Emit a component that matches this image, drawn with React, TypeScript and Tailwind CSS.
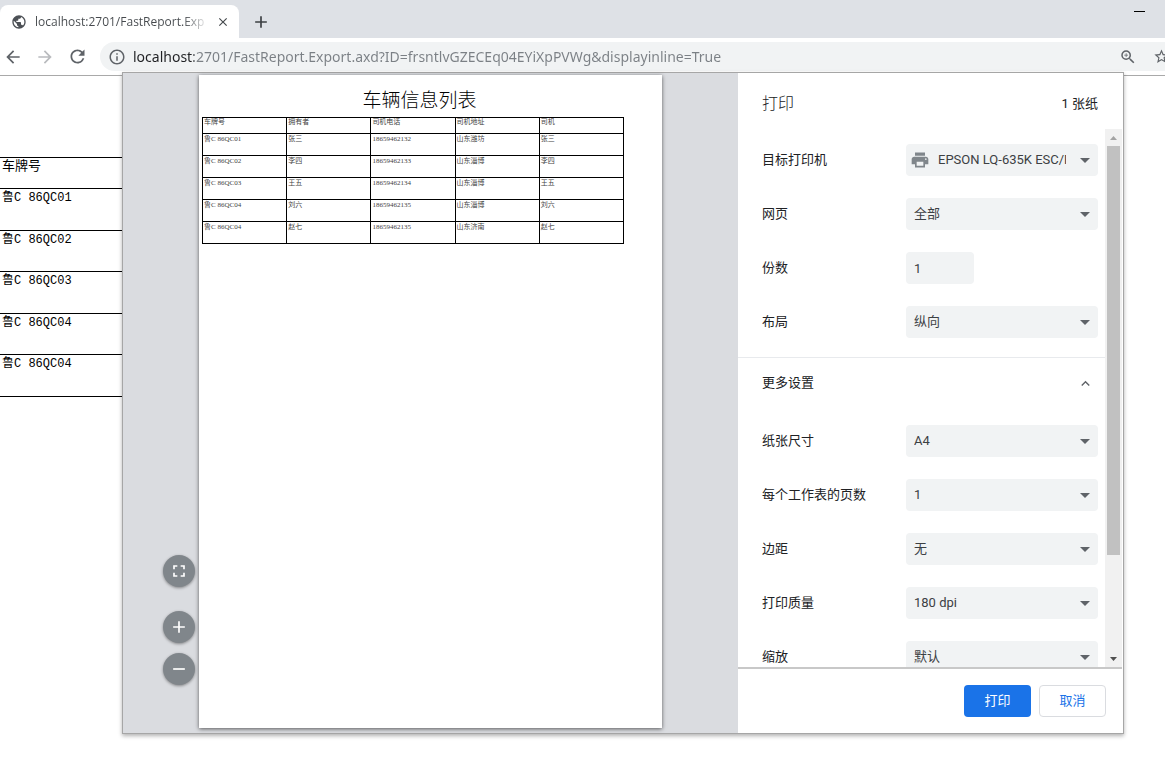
import React from "react";
import {
  MdAdd,
  MdArrowBack,
  MdArrowForward,
  MdClose,
  MdExpandLess,
  MdFullscreen,
  MdInfoOutline,
  MdPrint,
  MdPublic,
  MdRefresh,
  MdRemove,
  MdStarBorder,
  MdZoomIn,
} from "react-icons/md";

const URL_TEXT =
  "localhost:2701/FastReport.Export.axd?ID=frsntlvGZECEq04EYiXpPVWg&displayinline=True";

const plates = ["鲁C 86QC01", "鲁C 86QC02", "鲁C 86QC03", "鲁C 86QC04", "鲁C 86QC04"];

const columns = ["车牌号", "拥有者", "司机电话", "司机地址", "司机"];

const vehicles = [
  ["鲁C 86QC01", "张三", "18659462132", "山东潍坊", "张三"],
  ["鲁C 86QC02", "李四", "18659462133", "山东淄博", "李四"],
  ["鲁C 86QC03", "王五", "18659462134", "山东淄博", "王五"],
  ["鲁C 86QC04", "刘六", "18659462135", "山东淄博", "刘六"],
  ["鲁C 86QC04", "赵七", "18659462135", "山东济南", "赵七"],
];

const TabStrip = () => {
  return (
    <div className="flex h-[38px] items-end bg-[#dee1e6]">
      <div className="flex h-[33px] w-[239px] items-center rounded-t-lg bg-white pl-[11px] pr-[9px] pt-px">
        <MdPublic size={16} className="shrink-0 text-[#4d5156]" />
        <span className="ml-2 w-[174px] overflow-hidden whitespace-nowrap bg-[linear-gradient(90deg,#45494d_148px,transparent_174px)] bg-clip-text font-['Open_Sans',sans-serif] text-xs text-transparent">
          localhost:2701/FastReport.Exp
        </span>
        <button type="button" aria-label="关闭标签页" className="ml-auto text-[#45494d]">
          <MdClose size={14} />
        </button>
      </div>
      <button type="button" aria-label="新标签页" className="ml-3 mb-[6px] text-[#3c4043]">
        <MdAdd size={20} />
      </button>
      <button type="button" aria-label="最小化" className="ml-auto mr-5 flex h-full w-[11px] pt-[11px]">
        <span className="h-px w-full bg-black" />
      </button>
    </div>
  );
};

const Toolbar = () => {
  return (
    <div className="flex h-[38px] items-center border-b border-[#a9a9a9] bg-white pl-[3px] text-[#5f6368]">
      <button type="button" aria-label="后退">
        <MdArrowBack size={20} />
      </button>
      <button type="button" aria-label="前进" className="ml-3 text-[#b9bbbe]">
        <MdArrowForward size={20} />
      </button>
      <button type="button" aria-label="重新加载" className="ml-3">
        <MdRefresh size={21} />
      </button>
      <div className="ml-3 flex h-[29px] min-w-0 flex-1 items-center rounded-l-full bg-[#f1f3f4] pl-2">
        <MdInfoOutline size={18} className="shrink-0" />
        <input
          type="text"
          aria-label="地址栏"
          defaultValue={URL_TEXT}
          className="ml-[7px] min-w-0 flex-1 bg-[linear-gradient(90deg,#202124_61px,#7b8085_61px)] bg-clip-text font-['Noto_Sans',sans-serif] text-sm text-transparent outline-none"
        />
        <button type="button" aria-label="缩放" className="shrink-0">
          <MdZoomIn size={18} />
        </button>
        <button type="button" aria-label="收藏" className="ml-4 w-3 shrink-0 overflow-hidden">
          <MdStarBorder size={17} className="max-w-none" />
        </button>
      </div>
    </div>
  );
};

const PlateList = () => {
  return (
    <table className="mt-[81px] h-[240px] w-2/3 border-collapse text-left font-['Liberation_Mono','Noto_Sans_CJK_SC',monospace] text-xs text-black">
      <thead>
        <tr className="h-[31px] border-y border-black">
          <th className="pl-[2px] pt-px align-top text-[13px] font-normal leading-4">车牌号</th>
        </tr>
      </thead>
      <tbody>
        {plates.map((plate, i) => (
          <tr key={i} className="border-b border-black">
            <td className="pl-[2px] pt-px align-top leading-4">{plate}</td>
          </tr>
        ))}
      </tbody>
    </table>
  );
};

const RoundButton = ({ label, children }: { label: string; children: React.ReactNode }) => {
  return (
    <button
      type="button"
      aria-label={label}
      className="flex size-8 items-center justify-center rounded-full bg-[#80868b] text-white shadow-[0_1px_3px_rgba(0,0,0,0.4)]"
    >
      {children}
    </button>
  );
};

const Preview = () => {
  return (
    <div className="relative flex min-w-0 flex-1 justify-center bg-[#dadce0] pb-[5px] pt-[2px]">
      <div className="w-[463px] bg-white pl-[3px] pt-[15px] font-['Liberation_Serif','Noto_Sans_CJK_SC',serif] text-black shadow-[0_1px_4px_rgba(0,0,0,0.6)]">
        <h1 className="w-[435px] text-center text-[19px] font-light leading-[22px]">车辆信息列表</h1>
        <table className="mt-[5px] w-[422px] table-fixed border-collapse text-left text-[7px] text-[#444]">
          <thead>
            <tr className="h-4">
              {columns.map((col) => (
                <th key={col} className="border border-black px-px align-top font-normal leading-2">
                  {col}
                </th>
              ))}
            </tr>
          </thead>
          <tbody>
            {vehicles.map((row, i) => (
              <tr key={i} className="h-[22px]">
                {row.map((cell, j) => (
                  <td key={j} className="border border-black px-px pt-px align-top leading-2">
                    {cell}
                  </td>
                ))}
              </tr>
            ))}
          </tbody>
        </table>
      </div>
      <div className="absolute bottom-12 left-10 flex flex-col gap-[10px]">
        <div className="mb-[14px]">
          <RoundButton label="适合页面大小">
            <MdFullscreen size={20} />
          </RoundButton>
        </div>
        <RoundButton label="放大">
          <MdAdd size={20} />
        </RoundButton>
        <RoundButton label="缩小">
          <MdRemove size={20} />
        </RoundButton>
      </div>
    </div>
  );
};

interface SettingRowProps {
  id: string;
  label: string;
  children: React.ReactNode;
}

const SettingRow = ({ id, label, children }: SettingRowProps) => {
  return (
    <div className="flex h-[54px] shrink-0 items-center pl-6 pr-[7px]">
      <label htmlFor={id} className="flex-1">
        {label}
      </label>
      <div className="w-48">{children}</div>
    </div>
  );
};

interface SelectRowProps {
  id: string;
  label: string;
  value: string;
  printer?: boolean;
}

const SelectRow = ({ id, label, value, printer }: SelectRowProps) => {
  return (
    <SettingRow id={id} label={label}>
      <div className="relative flex items-center">
        {printer && <MdPrint size={20} className="absolute left-1 text-[#80868b]" />}
        <select
          id={id}
          className={`h-8 w-full appearance-none rounded bg-[#f1f3f4] pr-8 text-[#3c4043] ${
            printer ? "pl-8" : "pl-2"
          }`}
        >
          <option>{value}</option>
        </select>
        <svg viewBox="0 0 10 5" className="pointer-events-none absolute right-2 h-[5px] w-[10px]">
          <path d="M0 0h10L5 5z" fill="#5f6368" />
        </svg>
      </div>
    </SettingRow>
  );
};

const Scrollbar = () => {
  return (
    <div className="flex w-[17px] shrink-0 flex-col items-center bg-[#f1f1f1]">
      <div className="flex h-[17px] items-center">
        <svg viewBox="0 0 7 4" className="h-1 w-[7px]">
          <path d="M0 4h7L3.500 0z" fill="#a3a3a3" />
        </svg>
      </div>
      <div className="h-[76%] min-h-0 w-[13px] shrink bg-[#c1c1c1]" />
      <div className="mt-auto flex h-[17px] items-center">
        <svg viewBox="0 0 7 4" className="h-1 w-[7px]">
          <path d="M0 0h7L3.500 4z" fill="#505050" />
        </svg>
      </div>
    </div>
  );
};

const Settings = () => {
  return (
    <div className="flex w-[385px] shrink-0 flex-col bg-white pr-px text-[13px] text-[#202124]">
      <div className="flex h-14 shrink-0 items-center justify-between pl-6 pr-6 pt-[6px]">
        <h2 className="text-base font-light">打印</h2>
        <span>1 张纸</span>
      </div>
      <div className="flex min-h-0 flex-1 overflow-hidden">
        <div className="flex min-w-0 flex-1 flex-col pt-1">
          <SelectRow id="printer" label="目标打印机" value="EPSON LQ-635K ESC/P2" printer />
          <SelectRow id="pages" label="网页" value="全部" />
          <SettingRow id="copies" label="份数">
            <input
              id="copies"
              type="text"
              defaultValue="1"
              className="block h-8 w-[68px] rounded bg-[#f1f3f4] px-2 text-[#3c4043]"
            />
          </SettingRow>
          <SelectRow id="layout" label="布局" value="纵向" />
          <button
            type="button"
            className="mb-[6px] mt-2 flex h-[51px] shrink-0 items-center justify-between border-t border-[#e8eaed] pl-6 pr-[11px]"
          >
            更多设置
            <MdExpandLess size={17} className="text-[#5f6368]" />
          </button>
          <SelectRow id="paper" label="纸张尺寸" value="A4" />
          <SelectRow id="per-sheet" label="每个工作表的页数" value="1" />
          <SelectRow id="margins" label="边距" value="无" />
          <SelectRow id="quality" label="打印质量" value="180 dpi" />
          <SelectRow id="scale" label="缩放" value="默认" />
        </div>
        <Scrollbar />
      </div>
      <div className="flex h-[66px] shrink-0 items-center justify-end gap-2 border-t-2 border-[#c8c8c8] pr-4">
        <button type="button" className="h-8 w-[67px] rounded bg-[#1a73e8] text-white">
          打印
        </button>
        <button type="button" className="h-8 w-[67px] rounded border border-[#dadce0] text-[#1a73e8]">
          取消
        </button>
      </div>
    </div>
  );
};

const App = () => {
  return (
    <div className="relative flex h-screen flex-col overflow-hidden bg-white">
      <TabStrip />
      <Toolbar />
      <PlateList />
      <div className="absolute inset-0 flex pb-[34px] pl-[122px] pr-[41px] pt-[72px]">
        <div
          role="dialog"
          aria-label="打印"
          className="flex min-w-0 flex-1 border border-[#a6a6a6] font-[Roboto,'Noto_Sans_CJK_SC',sans-serif] shadow-[0_2px_4px_rgba(0,0,0,0.3)]"
        >
          <Preview />
          <Settings />
        </div>
      </div>
    </div>
  );
};

export default App;
